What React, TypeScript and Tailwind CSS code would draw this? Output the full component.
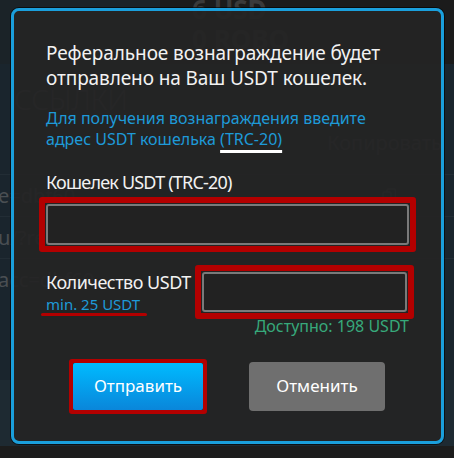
import React from 'react';

const font = { fontFamily: '"Noto Sans", "Open Sans", sans-serif' };

const CopyIcon: React.FC = () => (
  <svg width="14" height="16" viewBox="0 0 14 16" fill="none" stroke="currentColor" strokeWidth="1.5">
    <rect x="1" y="4" width="8" height="11" rx="1.5" />
    <path d="M5 4V2.5A1.5 1.5 0 0 1 6.5 1H12a1.5 1.5 0 0 1 1.5 1.5V10A1.5 1.5 0 0 1 12 11.5H9" />
  </svg>
);

const WithdrawModal: React.FC = () => {
  return (
    <div className="absolute left-[11px] top-[8px] w-[433px] h-[436px] rounded-[8px] border-[3px] border-[#1a9fdc] bg-[#242424]/[0.94] pt-[30px] pl-[25px] pr-[25px] ring-1 ring-black/60">
      <p className="pl-[7px] text-[19px] leading-[24.5px] tracking-[-0.1px] text-[#f2f2f2]">
        Реферальное вознаграждение будет
        <br />
        отправлено на Ваш USDT кошелек.
      </p>

      <p className="mt-[18px] pl-[7px] text-[16px] leading-[20.5px] text-[#1e9ad8]">
        Для получения вознаграждения введите
        <br />
        адрес USDT кошелька{' '}
        <span className="underline decoration-white decoration-[2.5px] underline-offset-[5px]">(TRC-20)</span>
      </p>

      <label className="mt-[21px] block pl-[7px] text-[18px] leading-[24.5px] tracking-[-0.8px] text-[#f2f2f2]">
        Кошелек USDT (TRC-20)
      </label>
      <div className="mt-[2px] w-[377px] rounded-[3px] border-[6px] border-[#b30000] p-px">
        <input
          type="text"
          className="block h-[41px] w-full rounded-[3px] border-2 border-[#7a7a7a] bg-[#222222] px-2 text-white outline-none"
        />
      </div>

      <div className="mt-[13px] flex items-start">
        <div className="w-[156px] pt-[5px]">
          <div className="pl-[7px] text-[18px] leading-[24.5px] tracking-[-0.5px] whitespace-nowrap text-[#f2f2f2]">Количество USDT</div>
          <div className="mt-[1px] pl-[7px] text-[15px] leading-[18px] text-[#1e9ad8]">min. 25 USDT</div>
          <div className="ml-[2px] h-[3px] w-[106px] rounded-full bg-[#b30000]" />
        </div>
        <div className="w-[219px] rounded-[3px] border-[6px] border-[#b30000] p-px">
          <input
            type="text"
            className="block h-[40px] w-full rounded-[3px] border-2 border-[#7a7a7a] bg-[#222222] px-2 text-white outline-none"
          />
        </div>
      </div>
      <div className="-mt-[3px] pr-[7px] text-right text-[16px] leading-[20px] text-[#37a97b]">
        Доступно: 198 USDT
      </div>

      <div className="mt-[23px] flex items-center">
        <div className="ml-[30px] rounded-[3px] border-4 border-[#b30000]">
          <button
            type="button"
            className="block h-[47px] w-[130px] rounded-[2px] bg-gradient-to-b from-[#00bbff] to-[#0a86da] text-[17px] text-white"
          >
            Отправить
          </button>
        </div>
        <button
          type="button"
          className="ml-[42px] h-[49px] w-[136px] rounded-[4px] bg-[#6f6f6f] text-[17px] text-white"
        >
          Отменить
        </button>
      </div>
    </div>
  );
};

const App: React.FC = () => {
  return (
    <div className="relative h-[458px] w-[454px] overflow-hidden bg-[#1b1b1b]" style={font}>
      {/* dimmed page behind the dialog */}
      <div className="flex h-full flex-col text-[#4a4f53]">
        <div className="flex h-[64px]">
          <div className="w-[160px] bg-[#1b2328]" />
          <div className="flex flex-1 flex-col pl-[32px] font-bold text-[#3a3a3a]">
            <span className="-mt-[6px] text-[26px] leading-[30px]">6 USD</span>
            <span className="text-[26px] leading-[30px]">0 ROBO</span>
          </div>
        </div>
        <div className="flex flex-1 flex-col bg-[#1a252d]">
          <div className="pl-[14px] pt-[18px] text-[28px] font-light leading-[34px]">ССЫЛКИ</div>
          <div className="flex justify-end pr-[12px] pt-[14px] text-[20px] leading-[26px]">Копировать</div>
          <div className="mt-[18px] flex h-[42px] items-center justify-between border-t border-[#222d35] pr-[58px] text-[20px]">
            <span className="-ml-[2px]">e=dbf60</span>
            <CopyIcon />
          </div>
          <div className="flex h-[42px] items-center justify-between border-t border-[#222d35] pr-[58px] text-[20px]">
            <span className="-ml-[2px]">u/?ref=dbf</span>
            <CopyIcon />
          </div>
          <div className="flex h-[42px] items-center justify-between border-t border-[#222d35] pr-[58px] text-[20px]">
            <span className="-ml-[2px]">acc=dbf60</span>
            <CopyIcon />
          </div>
          <div className="flex-1" />
          <div className="h-[66px] bg-[#1e2a32]" />
        </div>
        <div className="h-[12px] bg-[#1c1c1c]" />
      </div>

      <WithdrawModal />
    </div>
  );
};

export default App;
